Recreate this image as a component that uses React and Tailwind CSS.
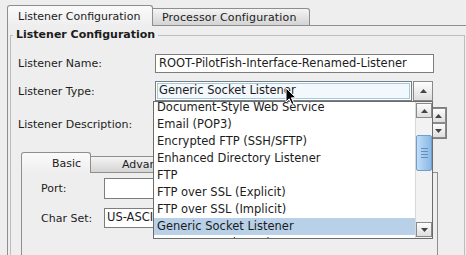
import React from 'react';

const items = [
  'Document-Style Web Service',
  'Email (POP3)',
  'Encrypted FTP (SSH/SFTP)',
  'Enhanced Directory Listener',
  'FTP',
  'FTP over SSL (Explicit)',
  'FTP over SSL (Implicit)',
  'Generic Socket Listener',
  'HTTP Server (POST)',
];

const UpArrow = () => (
  <svg width="7" height="4" viewBox="0 0 7 4"><path d="M0 4 L3.5 0 L7 4 Z" fill="#444" /></svg>
);
const DownArrow = () => (
  <svg width="7" height="4" viewBox="0 0 7 4"><path d="M0 0 L3.5 4 L7 0 Z" fill="#444" /></svg>
);

const ArrowButton = ({ down, className = '' }) => (
  <div className={`flex items-center justify-center border border-[#8a8a8a] bg-gradient-to-b from-[#fdfdfd] to-[#dedede] ${className}`}>
    {down ? <DownArrow /> : <UpArrow />}
  </div>
);

const App = () => {
  return (
    <div className="relative w-[466px] h-[255px] overflow-hidden bg-[#eeeeee] text-[11px] leading-none text-[#1c1c1c] font-['DejaVu_Sans',sans-serif]">
      {/* Outer tabs */}
      <div className="flex items-end h-[25px] pl-[7px]">
        <div className="relative z-10 mb-[-1px] h-[21px] w-[146px] flex items-center pl-[10px] border border-b-0 border-[#8e8e8e] rounded-t-[3px] bg-gradient-to-b from-[#fafafa] to-[#eeeeee]">
          Listener Configuration
        </div>
        <div className="h-[17px] w-[157px] flex items-center pl-[9px] border border-b-0 border-l-0 border-[#8e8e8e] rounded-tr-[3px] bg-gradient-to-b from-[#f4f4f4] to-[#d4d4d4] tracking-[0.15px]">
          Processor Configuration
        </div>
      </div>

      {/* Tab pane */}
      <div className="ml-[7px] h-[240px] border-t border-l border-[#8e8e8e] pl-[2px] pt-[2px]">
        <fieldset className="w-[455px] h-[240px] border border-[#bdbdbd]">
          <legend className="ml-[2px] px-[3px] font-bold text-[11px] leading-[14px]">Listener Configuration</legend>
          <div className="pl-[7px] pt-[12px]">
            <div className="flex items-center h-[19px]">
              <div className="w-[137px]">Listener Name:</div>
              <div className="w-[279px] h-[19px] border border-[#7d7d7d] bg-white flex items-center pl-[3px] text-[11.5px]">
                ROOT-PilotFish-Interface-Renamed-Listener
              </div>
            </div>
            <div className="flex items-center h-[20px] mt-[8px]">
              <div className="w-[137px]">Listener Type:</div>
              <div className="w-[278px] h-[20px] flex">
                <div className="flex-1 border border-[#7d7d7d] p-[1px] bg-white">
                  <div className="h-full border border-[#9fcbe3] bg-[#f3f8fc] flex items-center pl-[1px] text-[11.5px]">
                    Generic Socket Listener
                  </div>
                </div>
                <ArrowButton className="w-[20px] h-[20px] ml-[1px]" />
              </div>
            </div>
            <div className="flex items-start mt-[6px]">
              <div className="w-[137px] mt-[12px]">Listener Description:</div>
              <div className="w-[292px] h-[32px] border border-[#7d7d7d] bg-white flex justify-end">
                <div className="w-[15px] flex flex-col">
                  <ArrowButton className="h-[15px]" />
                  <ArrowButton down className="h-[15px]" />
                </div>
              </div>
            </div>

            {/* Inner tabs */}
            <div className="ml-[3px] mt-[13px]">
              <div className="flex items-end h-[20px]">
                <div className="relative z-10 mb-[-1px] h-[21px] w-[70px] flex items-center pl-[30px] border border-b-0 border-[#8e8e8e] rounded-t-[3px] bg-gradient-to-b from-[#fafafa] to-[#eeeeee]">
                  Basic
                </div>
                <div className="h-[16px] w-[100px] flex items-center pl-[31px] border border-b-0 border-l-0 border-[#8e8e8e] rounded-tr-[3px] bg-gradient-to-b from-[#f4f4f4] to-[#d4d4d4]">
                  Advanced
                </div>
              </div>
              <div className="w-[417px] h-[90px] border border-b-0 border-[#8e8e8e] pl-[19px] pt-[5px]">
                <div className="flex items-center h-[21px]">
                  <div className="w-[63px]">Port:</div>
                  <div className="w-[200px] h-[21px] border border-[#7d7d7d] bg-white" />
                </div>
                <div className="flex items-center h-[20px] mt-[9px]">
                  <div className="w-[63px]">Char Set:</div>
                  <div className="w-[200px] h-[20px] border border-[#7d7d7d] bg-white flex items-center pl-[2px] text-[11.5px]">
                    US-ASCII
                  </div>
                </div>
              </div>
            </div>
          </div>
        </fieldset>
      </div>

      {/* Combo popup */}
      <div className="absolute left-[153px] top-[101px] w-[280px] h-[138px] border border-[#6c6c6c] bg-white flex overflow-hidden">
        <div className="flex-1 overflow-hidden">
          <div className="mt-[-3px]">
            {items.map((it) => (
              <div
                key={it}
                className={`h-[17px] flex items-center pl-[3px] text-[11.5px] ${it === 'Generic Socket Listener' ? 'bg-[#b8d0e8]' : ''}`}
              >
                {it}
              </div>
            ))}
          </div>
        </div>
        <div className="w-[17px] flex flex-col bg-[#f2f2f2] border-l border-[#d8d8d8] pt-[1px] pb-[1px]">
          <ArrowButton className="h-[15px] w-[16px]" />
          <div className="flex-1 relative">
            <div className="mt-[17px] h-[36px] w-[16px] border border-[#6f9fcf] rounded-[2px] bg-gradient-to-r from-[#c4ddf5] via-[#a5caee] to-[#8ab9e6] flex flex-col items-center justify-center gap-[2px]">
              <div className="w-[7px] h-px bg-[#5d8fc4]" />
              <div className="w-[7px] h-px bg-[#5d8fc4]" />
              <div className="w-[7px] h-px bg-[#5d8fc4]" />
              <div className="w-[7px] h-px bg-[#5d8fc4]" />
            </div>
          </div>
          <ArrowButton down className="h-[15px] w-[16px]" />
        </div>
      </div>

      {/* Mouse cursor */}
      <svg className="absolute left-[285px] top-[87px]" width="14" height="19" viewBox="0 0 14 19">
        <path d="M1 1 L1 15 L4.2 11.8 L6.8 17.5 L9 16.5 L6.4 10.8 L11 10.8 Z" fill="#000" stroke="#fff" strokeWidth="1" />
      </svg>
    </div>
  );
};

export default App;
